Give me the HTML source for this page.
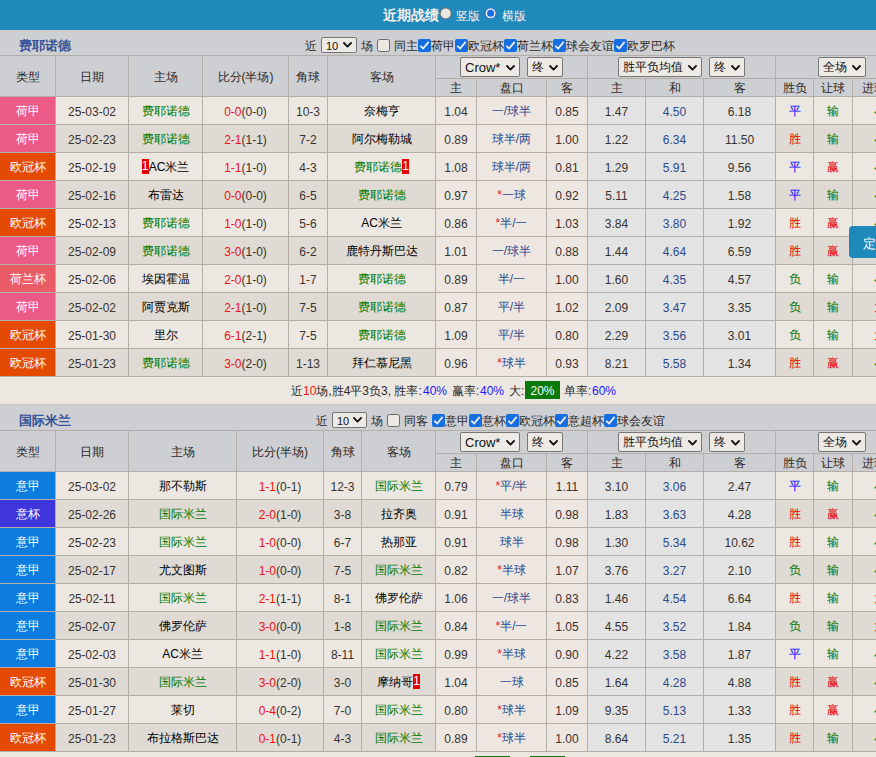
<!DOCTYPE html>
<html><head><meta charset="utf-8"><title>近期战绩</title><style>
html,body{margin:0;padding:0}
body{width:908px;height:757px;overflow:hidden;background:#ece7e1;font-family:"Liberation Sans",sans-serif;font-size:12px;color:#2d2926;position:relative}
.top{height:30px;background:#2089bc;position:relative;color:#fff}
.top b{position:absolute;left:383px;top:7px;font-size:14px;line-height:16px;font-weight:bold;color:#f4f1ec}
.top .tl{position:absolute;top:9px;font-size:12px;line-height:14px;color:#f4f1ec}
.rd{position:absolute;width:10px;height:10px;border-radius:50%;border:1px solid #6e6862;background:#ebe7e2}
.rd.on{border:1px solid #1a6de0;background:#f1ede8}
.rd.on:after{content:"";position:absolute;left:1.5px;top:1.5px;width:7px;height:7px;border-radius:50%;background:#1a6ef0}
.rs{position:absolute;display:block}
.sec{height:25px;border-bottom:1px solid #b3aea7;background:#cdcfd2;position:relative}
.tn{position:absolute;left:19px;top:8px;font-size:13px;line-height:15px;color:#37549a;font-weight:bold}
.lb{position:absolute;line-height:14px;font-size:12px;color:#2d2926;white-space:nowrap}
.cb{position:absolute;width:11px;height:11px;border:1px solid #6e6862;border-radius:2.5px;background:#ece8e3}
.cb.on{border:0;width:13px;height:13px;background:#156fe2;border-radius:2px}
.cb svg{display:block}
.sel{position:absolute;box-sizing:border-box;border:1px solid #767676;border-radius:2px;background:#ede9e4;font-size:13px;color:#111;padding-left:4px;padding-top:1px;white-space:nowrap;text-align:left;font-weight:normal}
.sel.sm{font-size:11px;padding-left:4px;padding-top:1px}
.sel.sm .cv{margin-top:-3px}
.sel .cv{position:absolute;right:4px;top:50%;margin-top:-2.5px}
.sel.cj{font-size:12px;padding-top:0}
table.t{border-collapse:separate;border-spacing:0;table-layout:fixed;width:908px}
.t th,.t td{box-sizing:border-box;border-right:1px solid #b3aea7;border-bottom:1px solid #b3aea7;padding:0;text-align:center;font-weight:normal;overflow:hidden;white-space:nowrap;font-size:12px}
.t th{background:#cdcfd2;color:#2d2926}
.h1 th{height:41px}
.h1 th .c{height:40px;line-height:38px;padding-top:2px}
.h1 th.hs{height:23px}
.h2 th{height:18px}
.h2 th .c{height:17px;line-height:15px;padding-top:2px}
.t td{height:28px}
.t .c{box-sizing:border-box;overflow:hidden;white-space:nowrap}
.t td .c{height:27px;line-height:23px;padding-top:4px}
.t td .c.z{line-height:25px;padding-top:2px}
tr.o td{background:#ece7e1}
tr.e td{background:#dfdad4}
.t tr td.hp{background:#eee6e0}
.t tr td.eu{background:#e3e3e3}
.t td.lg{color:#fff}
.t td.hj{background:#ec5b87}
.t td.og{background:#e54b00}
.t td.hl{background:#ea5c66}
.t td.yj{background:#0c7ddf}
.t td.yb{background:#4035dd}
.tm{color:#000}
.cg{color:#007a00}
.cr{color:#e11}
.t td{color:#38332f}
.t td.cb1{color:#00f}
.t td.wr{color:#e60000}
.t td.wg{color:#007000}
.t td.tm{color:#000}
.t td.pk{color:#2b4b8c}
.t td.lg{color:#fff}
.cbl{color:#1a1aff}
.sc{color:#e11}
.pk{color:#2b4b8c}
.rc{display:inline-block;font-style:normal;background:#e60000;color:#fff;width:7px;height:15px;line-height:15px;vertical-align:middle;text-align:center;position:relative;top:-1px}
.sum{height:27px;border-bottom:1px solid #c9c5bf;background:#ece7e1;position:relative}
.sum>span{position:absolute;top:7px;line-height:15px;white-space:nowrap;font-size:12px;color:#2d2926}
.sum>span.gb{top:4px;width:35px;height:18px;line-height:20px;background:#0a7a0a;color:#fff;text-align:center}
.sum>span.cbl{color:#1a1aff}
.sum span.cr{color:#e11}
.fl{position:absolute;left:849px;top:226px;width:40px;height:32px;background:#2089bc;border-radius:4px 0 0 4px;color:#fff;font-size:13px;line-height:35px;padding-left:14px;box-sizing:border-box}
.hsel{position:absolute;left:0;top:0}
</style></head><body>
<div class="top"><b>近期战绩</b><svg class="rs" style="left:439px;top:7px" width="14" height="14" viewBox="0 0 14 14"><circle cx="6.7" cy="6.4" r="5.5" fill="#ebe7e2" stroke="#6e6862" stroke-width="1"/></svg><span class="tl" style="left:456px">竖版</span><svg class="rs" style="left:484px;top:7px" width="14" height="14" viewBox="0 0 14 14"><circle cx="6.6" cy="6.3" r="5.5" fill="#f1ede8" stroke="#1668de" stroke-width="1"/><circle cx="6.6" cy="6.3" r="3.5" fill="#156fe2"/></svg><span class="tl" style="left:502px">横版</span></div>
<div class="sec"><b class="tn">费耶诺德</b><span class="lb" style="left:305px;top:9px">近</span><span class="sel sm" style="left:321px;top:7px;width:36px;height:16px;line-height:14px">10<svg class="cv" viewBox="0 0 9 6" width="9" height="6"><path d="M1 1 L4.5 4.6 L8 1" fill="none" stroke="#111" stroke-width="1.8" stroke-linecap="round" stroke-linejoin="round"/></svg></span><span class="lb" style="left:361px;top:9px">场</span><span class="cb" style="left:377px;top:9px"></span><span class="lb" style="left:394px;top:9px">同主</span><span class="cb on" style="left:418px;top:9px"><svg viewBox="0 0 13 13" width="13" height="13"><path d="M2.3 6.9 L5.2 9.5 L10.6 2.9" fill="none" stroke="#f0ece6" stroke-width="1.8" stroke-linecap="butt" stroke-linejoin="miter"/></svg></span><span class="lb" style="left:431px;top:9px">荷甲</span><span class="cb on" style="left:455px;top:9px"><svg viewBox="0 0 13 13" width="13" height="13"><path d="M2.3 6.9 L5.2 9.5 L10.6 2.9" fill="none" stroke="#f0ece6" stroke-width="1.8" stroke-linecap="butt" stroke-linejoin="miter"/></svg></span><span class="lb" style="left:468px;top:9px">欧冠杯</span><span class="cb on" style="left:504px;top:9px"><svg viewBox="0 0 13 13" width="13" height="13"><path d="M2.3 6.9 L5.2 9.5 L10.6 2.9" fill="none" stroke="#f0ece6" stroke-width="1.8" stroke-linecap="butt" stroke-linejoin="miter"/></svg></span><span class="lb" style="left:517px;top:9px">荷兰杯</span><span class="cb on" style="left:553px;top:9px"><svg viewBox="0 0 13 13" width="13" height="13"><path d="M2.3 6.9 L5.2 9.5 L10.6 2.9" fill="none" stroke="#f0ece6" stroke-width="1.8" stroke-linecap="butt" stroke-linejoin="miter"/></svg></span><span class="lb" style="left:566px;top:9px">球会友谊</span><span class="cb on" style="left:614px;top:9px"><svg viewBox="0 0 13 13" width="13" height="13"><path d="M2.3 6.9 L5.2 9.5 L10.6 2.9" fill="none" stroke="#f0ece6" stroke-width="1.8" stroke-linecap="butt" stroke-linejoin="miter"/></svg></span><span class="lb" style="left:627px;top:9px">欧罗巴杯</span></div>
<table class="t"><col style="width:56px"><col style="width:73px"><col style="width:74px"><col style="width:86px"><col style="width:39px"><col style="width:108px"><col style="width:41px"><col style="width:70px"><col style="width:41px"><col style="width:58px"><col style="width:58px"><col style="width:72px"><col style="width:38px"><col style="width:39px"><col style="width:55px">
<tr class="h1"><th rowspan="2"><div class="c">类型</div></th><th rowspan="2"><div class="c">日期</div></th><th rowspan="2"><div class="c">主场</div></th><th rowspan="2"><div class="c">比分(半场)</div></th><th rowspan="2"><div class="c">角球</div></th><th rowspan="2"><div class="c">客场</div></th><th colspan="3" class="hs"></th><th colspan="3" class="hs"></th><th colspan="3" class="hs"></th></tr>
<tr class="h2"><th><div class="c">主</div></th><th><div class="c">盘口</div></th><th><div class="c">客</div></th><th><div class="c">主</div></th><th><div class="c">和</div></th><th><div class="c">客</div></th><th><div class="c">胜负</div></th><th><div class="c">让球</div></th><th><div class="c">进球数</div></th></tr>
<tr class="o"><td class="lg hj"><div class="c z">荷甲</div></td><td><div class="c">25-03-02</div></td><td class="tm"><div class="c z"><span class="cg">费耶诺德</span></div></td><td><div class="c"><span class="sc">0-0</span>(0-0)</div></td><td><div class="c">10-3</div></td><td class="tm"><div class="c z">奈梅亨</div></td><td class="hp"><div class="c">1.04</div></td><td class="hp pk"><div class="c z">一/球半</div></td><td class="hp"><div class="c">0.85</div></td><td class="eu"><div class="c">1.47</div></td><td class="eu pk"><div class="c">4.50</div></td><td class="eu"><div class="c">6.18</div></td><td class="cb1"><div class="c z">平</div></td><td class="wg"><div class="c z">输</div></td><td><div class="c z"><span class="cg">小</span></div></td></tr>
<tr class="e"><td class="lg hj"><div class="c z">荷甲</div></td><td><div class="c">25-02-23</div></td><td class="tm"><div class="c z"><span class="cg">费耶诺德</span></div></td><td><div class="c"><span class="sc">2-1</span>(1-1)</div></td><td><div class="c">7-2</div></td><td class="tm"><div class="c z">阿尔梅勒城</div></td><td class="hp"><div class="c">0.89</div></td><td class="hp pk"><div class="c z">球半/两</div></td><td class="hp"><div class="c">1.00</div></td><td class="eu"><div class="c">1.22</div></td><td class="eu pk"><div class="c">6.34</div></td><td class="eu"><div class="c">11.50</div></td><td class="wr"><div class="c z">胜</div></td><td class="wg"><div class="c z">输</div></td><td><div class="c z"><span class="cg">小</span></div></td></tr>
<tr class="o"><td class="lg og"><div class="c z">欧冠杯</div></td><td><div class="c">25-02-19</div></td><td class="tm"><div class="c z"><i class="rc">1</i>AC米兰</div></td><td><div class="c"><span class="sc">1-1</span>(1-0)</div></td><td><div class="c">4-3</div></td><td class="tm"><div class="c z"><span class="cg">费耶诺德</span><i class="rc">1</i></div></td><td class="hp"><div class="c">1.08</div></td><td class="hp pk"><div class="c z">球半/两</div></td><td class="hp"><div class="c">0.81</div></td><td class="eu"><div class="c">1.29</div></td><td class="eu pk"><div class="c">5.91</div></td><td class="eu"><div class="c">9.56</div></td><td class="cb1"><div class="c z">平</div></td><td class="wr"><div class="c z">赢</div></td><td><div class="c z"><span class="cg">小</span></div></td></tr>
<tr class="e"><td class="lg hj"><div class="c z">荷甲</div></td><td><div class="c">25-02-16</div></td><td class="tm"><div class="c z">布雷达</div></td><td><div class="c"><span class="sc">0-0</span>(0-0)</div></td><td><div class="c">6-5</div></td><td class="tm"><div class="c z"><span class="cg">费耶诺德</span></div></td><td class="hp"><div class="c">0.97</div></td><td class="hp pk"><div class="c z"><span class="cr">*</span>一球</div></td><td class="hp"><div class="c">0.92</div></td><td class="eu"><div class="c">5.11</div></td><td class="eu pk"><div class="c">4.25</div></td><td class="eu"><div class="c">1.58</div></td><td class="cb1"><div class="c z">平</div></td><td class="wg"><div class="c z">输</div></td><td><div class="c z"><span class="cg">小</span></div></td></tr>
<tr class="o"><td class="lg og"><div class="c z">欧冠杯</div></td><td><div class="c">25-02-13</div></td><td class="tm"><div class="c z"><span class="cg">费耶诺德</span></div></td><td><div class="c"><span class="sc">1-0</span>(1-0)</div></td><td><div class="c">5-6</div></td><td class="tm"><div class="c z">AC米兰</div></td><td class="hp"><div class="c">0.86</div></td><td class="hp pk"><div class="c z"><span class="cr">*</span>半/一</div></td><td class="hp"><div class="c">1.03</div></td><td class="eu"><div class="c">3.84</div></td><td class="eu pk"><div class="c">3.80</div></td><td class="eu"><div class="c">1.92</div></td><td class="wr"><div class="c z">胜</div></td><td class="wr"><div class="c z">赢</div></td><td><div class="c z"><span class="cg">小</span></div></td></tr>
<tr class="e"><td class="lg hj"><div class="c z">荷甲</div></td><td><div class="c">25-02-09</div></td><td class="tm"><div class="c z"><span class="cg">费耶诺德</span></div></td><td><div class="c"><span class="sc">3-0</span>(1-0)</div></td><td><div class="c">6-2</div></td><td class="tm"><div class="c z">鹿特丹斯巴达</div></td><td class="hp"><div class="c">1.01</div></td><td class="hp pk"><div class="c z">一/球半</div></td><td class="hp"><div class="c">0.88</div></td><td class="eu"><div class="c">1.44</div></td><td class="eu pk"><div class="c">4.64</div></td><td class="eu"><div class="c">6.59</div></td><td class="wr"><div class="c z">胜</div></td><td class="wr"><div class="c z">赢</div></td><td><div class="c z"><span class="cg">小</span></div></td></tr>
<tr class="o"><td class="lg hl"><div class="c z">荷兰杯</div></td><td><div class="c">25-02-06</div></td><td class="tm"><div class="c z">埃因霍温</div></td><td><div class="c"><span class="sc">2-0</span>(1-0)</div></td><td><div class="c">1-7</div></td><td class="tm"><div class="c z"><span class="cg">费耶诺德</span></div></td><td class="hp"><div class="c">0.89</div></td><td class="hp pk"><div class="c z">半/一</div></td><td class="hp"><div class="c">1.00</div></td><td class="eu"><div class="c">1.60</div></td><td class="eu pk"><div class="c">4.35</div></td><td class="eu"><div class="c">4.57</div></td><td class="wg"><div class="c z">负</div></td><td class="wg"><div class="c z">输</div></td><td><div class="c z"><span class="cg">小</span></div></td></tr>
<tr class="e"><td class="lg hj"><div class="c z">荷甲</div></td><td><div class="c">25-02-02</div></td><td class="tm"><div class="c z">阿贾克斯</div></td><td><div class="c"><span class="sc">2-1</span>(1-0)</div></td><td><div class="c">7-5</div></td><td class="tm"><div class="c z"><span class="cg">费耶诺德</span></div></td><td class="hp"><div class="c">0.87</div></td><td class="hp pk"><div class="c z">平/半</div></td><td class="hp"><div class="c">1.02</div></td><td class="eu"><div class="c">2.09</div></td><td class="eu pk"><div class="c">3.47</div></td><td class="eu"><div class="c">3.35</div></td><td class="wg"><div class="c z">负</div></td><td class="wg"><div class="c z">输</div></td><td><div class="c z"><span class="cr">大</span></div></td></tr>
<tr class="o"><td class="lg og"><div class="c z">欧冠杯</div></td><td><div class="c">25-01-30</div></td><td class="tm"><div class="c z">里尔</div></td><td><div class="c"><span class="sc">6-1</span>(2-1)</div></td><td><div class="c">7-5</div></td><td class="tm"><div class="c z"><span class="cg">费耶诺德</span></div></td><td class="hp"><div class="c">1.09</div></td><td class="hp pk"><div class="c z">平/半</div></td><td class="hp"><div class="c">0.80</div></td><td class="eu"><div class="c">2.29</div></td><td class="eu pk"><div class="c">3.56</div></td><td class="eu"><div class="c">3.01</div></td><td class="wg"><div class="c z">负</div></td><td class="wg"><div class="c z">输</div></td><td><div class="c z"><span class="cr">大</span></div></td></tr>
<tr class="e"><td class="lg og"><div class="c z">欧冠杯</div></td><td><div class="c">25-01-23</div></td><td class="tm"><div class="c z"><span class="cg">费耶诺德</span></div></td><td><div class="c"><span class="sc">3-0</span>(2-0)</div></td><td><div class="c">1-13</div></td><td class="tm"><div class="c z">拜仁慕尼黑</div></td><td class="hp"><div class="c">0.96</div></td><td class="hp pk"><div class="c z"><span class="cr">*</span>球半</div></td><td class="hp"><div class="c">0.93</div></td><td class="eu"><div class="c">8.21</div></td><td class="eu pk"><div class="c">5.58</div></td><td class="eu"><div class="c">1.34</div></td><td class="wr"><div class="c z">胜</div></td><td class="wr"><div class="c z">赢</div></td><td><div class="c z"><span class="cg">小</span></div></td></tr>
</table>
<div class="sum"><span style="left:291px">近<span class="cr">10</span>场,胜4平3负3, 胜率:</span><span class="cbl" style="left:423px">40%</span><span style="left:452px">赢率:</span><span class="cbl" style="left:480px">40%</span><span style="left:509px">大:</span><span class="gb" style="left:525px">20%</span><span style="left:564px">单率:</span><span class="cbl" style="left:592px">60%</span></div>
<div class="sec"><b class="tn">国际米兰</b><span class="lb" style="left:316px;top:9px">近</span><span class="sel sm" style="left:332px;top:7px;width:35px;height:16px;line-height:14px">10<svg class="cv" viewBox="0 0 9 6" width="9" height="6"><path d="M1 1 L4.5 4.6 L8 1" fill="none" stroke="#111" stroke-width="1.8" stroke-linecap="round" stroke-linejoin="round"/></svg></span><span class="lb" style="left:371px;top:9px">场</span><span class="cb" style="left:387px;top:9px"></span><span class="lb" style="left:404px;top:9px">同客</span><span class="cb on" style="left:432px;top:9px"><svg viewBox="0 0 13 13" width="13" height="13"><path d="M2.3 6.9 L5.2 9.5 L10.6 2.9" fill="none" stroke="#f0ece6" stroke-width="1.8" stroke-linecap="butt" stroke-linejoin="miter"/></svg></span><span class="lb" style="left:445px;top:9px">意甲</span><span class="cb on" style="left:469px;top:9px"><svg viewBox="0 0 13 13" width="13" height="13"><path d="M2.3 6.9 L5.2 9.5 L10.6 2.9" fill="none" stroke="#f0ece6" stroke-width="1.8" stroke-linecap="butt" stroke-linejoin="miter"/></svg></span><span class="lb" style="left:482px;top:9px">意杯</span><span class="cb on" style="left:506px;top:9px"><svg viewBox="0 0 13 13" width="13" height="13"><path d="M2.3 6.9 L5.2 9.5 L10.6 2.9" fill="none" stroke="#f0ece6" stroke-width="1.8" stroke-linecap="butt" stroke-linejoin="miter"/></svg></span><span class="lb" style="left:519px;top:9px">欧冠杯</span><span class="cb on" style="left:555px;top:9px"><svg viewBox="0 0 13 13" width="13" height="13"><path d="M2.3 6.9 L5.2 9.5 L10.6 2.9" fill="none" stroke="#f0ece6" stroke-width="1.8" stroke-linecap="butt" stroke-linejoin="miter"/></svg></span><span class="lb" style="left:568px;top:9px">意超杯</span><span class="cb on" style="left:604px;top:9px"><svg viewBox="0 0 13 13" width="13" height="13"><path d="M2.3 6.9 L5.2 9.5 L10.6 2.9" fill="none" stroke="#f0ece6" stroke-width="1.8" stroke-linecap="butt" stroke-linejoin="miter"/></svg></span><span class="lb" style="left:617px;top:9px">球会友谊</span></div>
<table class="t"><col style="width:56px"><col style="width:73px"><col style="width:108px"><col style="width:87px"><col style="width:38px"><col style="width:74px"><col style="width:41px"><col style="width:70px"><col style="width:41px"><col style="width:58px"><col style="width:58px"><col style="width:72px"><col style="width:38px"><col style="width:39px"><col style="width:55px">
<tr class="h1"><th rowspan="2"><div class="c">类型</div></th><th rowspan="2"><div class="c">日期</div></th><th rowspan="2"><div class="c">主场</div></th><th rowspan="2"><div class="c">比分(半场)</div></th><th rowspan="2"><div class="c">角球</div></th><th rowspan="2"><div class="c">客场</div></th><th colspan="3" class="hs"></th><th colspan="3" class="hs"></th><th colspan="3" class="hs"></th></tr>
<tr class="h2"><th><div class="c">主</div></th><th><div class="c">盘口</div></th><th><div class="c">客</div></th><th><div class="c">主</div></th><th><div class="c">和</div></th><th><div class="c">客</div></th><th><div class="c">胜负</div></th><th><div class="c">让球</div></th><th><div class="c">进球数</div></th></tr>
<tr class="o"><td class="lg yj"><div class="c z">意甲</div></td><td><div class="c">25-03-02</div></td><td class="tm"><div class="c z">那不勒斯</div></td><td><div class="c"><span class="sc">1-1</span>(0-1)</div></td><td><div class="c">12-3</div></td><td class="tm"><div class="c z"><span class="cg">国际米兰</span></div></td><td class="hp"><div class="c">0.79</div></td><td class="hp pk"><div class="c z"><span class="cr">*</span>平/半</div></td><td class="hp"><div class="c">1.11</div></td><td class="eu"><div class="c">3.10</div></td><td class="eu pk"><div class="c">3.06</div></td><td class="eu"><div class="c">2.47</div></td><td class="cb1"><div class="c z">平</div></td><td class="wg"><div class="c z">输</div></td><td><div class="c z"><span class="cg">小</span></div></td></tr>
<tr class="e"><td class="lg yb"><div class="c z">意杯</div></td><td><div class="c">25-02-26</div></td><td class="tm"><div class="c z"><span class="cg">国际米兰</span></div></td><td><div class="c"><span class="sc">2-0</span>(1-0)</div></td><td><div class="c">3-8</div></td><td class="tm"><div class="c z">拉齐奥</div></td><td class="hp"><div class="c">0.91</div></td><td class="hp pk"><div class="c z">半球</div></td><td class="hp"><div class="c">0.98</div></td><td class="eu"><div class="c">1.83</div></td><td class="eu pk"><div class="c">3.63</div></td><td class="eu"><div class="c">4.28</div></td><td class="wr"><div class="c z">胜</div></td><td class="wr"><div class="c z">赢</div></td><td><div class="c z"><span class="cg">小</span></div></td></tr>
<tr class="o"><td class="lg yj"><div class="c z">意甲</div></td><td><div class="c">25-02-23</div></td><td class="tm"><div class="c z"><span class="cg">国际米兰</span></div></td><td><div class="c"><span class="sc">1-0</span>(0-0)</div></td><td><div class="c">6-7</div></td><td class="tm"><div class="c z">热那亚</div></td><td class="hp"><div class="c">0.91</div></td><td class="hp pk"><div class="c z">球半</div></td><td class="hp"><div class="c">0.98</div></td><td class="eu"><div class="c">1.30</div></td><td class="eu pk"><div class="c">5.34</div></td><td class="eu"><div class="c">10.62</div></td><td class="wr"><div class="c z">胜</div></td><td class="wg"><div class="c z">输</div></td><td><div class="c z"><span class="cg">小</span></div></td></tr>
<tr class="e"><td class="lg yj"><div class="c z">意甲</div></td><td><div class="c">25-02-17</div></td><td class="tm"><div class="c z">尤文图斯</div></td><td><div class="c"><span class="sc">1-0</span>(0-0)</div></td><td><div class="c">7-5</div></td><td class="tm"><div class="c z"><span class="cg">国际米兰</span></div></td><td class="hp"><div class="c">0.82</div></td><td class="hp pk"><div class="c z"><span class="cr">*</span>半球</div></td><td class="hp"><div class="c">1.07</div></td><td class="eu"><div class="c">3.76</div></td><td class="eu pk"><div class="c">3.27</div></td><td class="eu"><div class="c">2.10</div></td><td class="wg"><div class="c z">负</div></td><td class="wg"><div class="c z">输</div></td><td><div class="c z"><span class="cg">小</span></div></td></tr>
<tr class="o"><td class="lg yj"><div class="c z">意甲</div></td><td><div class="c">25-02-11</div></td><td class="tm"><div class="c z"><span class="cg">国际米兰</span></div></td><td><div class="c"><span class="sc">2-1</span>(1-1)</div></td><td><div class="c">8-1</div></td><td class="tm"><div class="c z">佛罗伦萨</div></td><td class="hp"><div class="c">1.06</div></td><td class="hp pk"><div class="c z">一/球半</div></td><td class="hp"><div class="c">0.83</div></td><td class="eu"><div class="c">1.46</div></td><td class="eu pk"><div class="c">4.54</div></td><td class="eu"><div class="c">6.64</div></td><td class="wr"><div class="c z">胜</div></td><td class="wg"><div class="c z">输</div></td><td><div class="c z"><span class="cr">大</span></div></td></tr>
<tr class="e"><td class="lg yj"><div class="c z">意甲</div></td><td><div class="c">25-02-07</div></td><td class="tm"><div class="c z">佛罗伦萨</div></td><td><div class="c"><span class="sc">3-0</span>(0-0)</div></td><td><div class="c">1-8</div></td><td class="tm"><div class="c z"><span class="cg">国际米兰</span></div></td><td class="hp"><div class="c">0.84</div></td><td class="hp pk"><div class="c z"><span class="cr">*</span>半/一</div></td><td class="hp"><div class="c">1.05</div></td><td class="eu"><div class="c">4.55</div></td><td class="eu pk"><div class="c">3.52</div></td><td class="eu"><div class="c">1.84</div></td><td class="wg"><div class="c z">负</div></td><td class="wg"><div class="c z">输</div></td><td><div class="c z"><span class="cr">大</span></div></td></tr>
<tr class="o"><td class="lg yj"><div class="c z">意甲</div></td><td><div class="c">25-02-03</div></td><td class="tm"><div class="c z">AC米兰</div></td><td><div class="c"><span class="sc">1-1</span>(1-0)</div></td><td><div class="c">8-11</div></td><td class="tm"><div class="c z"><span class="cg">国际米兰</span></div></td><td class="hp"><div class="c">0.99</div></td><td class="hp pk"><div class="c z"><span class="cr">*</span>半球</div></td><td class="hp"><div class="c">0.90</div></td><td class="eu"><div class="c">4.22</div></td><td class="eu pk"><div class="c">3.58</div></td><td class="eu"><div class="c">1.87</div></td><td class="cb1"><div class="c z">平</div></td><td class="wg"><div class="c z">输</div></td><td><div class="c z"><span class="cg">小</span></div></td></tr>
<tr class="e"><td class="lg og"><div class="c z">欧冠杯</div></td><td><div class="c">25-01-30</div></td><td class="tm"><div class="c z"><span class="cg">国际米兰</span></div></td><td><div class="c"><span class="sc">3-0</span>(2-0)</div></td><td><div class="c">3-0</div></td><td class="tm"><div class="c z">摩纳哥<i class="rc">1</i></div></td><td class="hp"><div class="c">1.04</div></td><td class="hp pk"><div class="c z">一球</div></td><td class="hp"><div class="c">0.85</div></td><td class="eu"><div class="c">1.64</div></td><td class="eu pk"><div class="c">4.28</div></td><td class="eu"><div class="c">4.88</div></td><td class="wr"><div class="c z">胜</div></td><td class="wr"><div class="c z">赢</div></td><td><div class="c z"><span class="cg">小</span></div></td></tr>
<tr class="o"><td class="lg yj"><div class="c z">意甲</div></td><td><div class="c">25-01-27</div></td><td class="tm"><div class="c z">莱切</div></td><td><div class="c"><span class="sc">0-4</span>(0-2)</div></td><td><div class="c">7-0</div></td><td class="tm"><div class="c z"><span class="cg">国际米兰</span></div></td><td class="hp"><div class="c">0.80</div></td><td class="hp pk"><div class="c z"><span class="cr">*</span>球半</div></td><td class="hp"><div class="c">1.09</div></td><td class="eu"><div class="c">9.35</div></td><td class="eu pk"><div class="c">5.13</div></td><td class="eu"><div class="c">1.33</div></td><td class="wr"><div class="c z">胜</div></td><td class="wr"><div class="c z">赢</div></td><td><div class="c z"><span class="cg">小</span></div></td></tr>
<tr class="e"><td class="lg og"><div class="c z">欧冠杯</div></td><td><div class="c">25-01-23</div></td><td class="tm"><div class="c z">布拉格斯巴达</div></td><td><div class="c"><span class="sc">0-1</span>(0-1)</div></td><td><div class="c">4-3</div></td><td class="tm"><div class="c z"><span class="cg">国际米兰</span></div></td><td class="hp"><div class="c">0.89</div></td><td class="hp pk"><div class="c z"><span class="cr">*</span>球半</div></td><td class="hp"><div class="c">1.00</div></td><td class="eu"><div class="c">8.64</div></td><td class="eu pk"><div class="c">5.21</div></td><td class="eu"><div class="c">1.35</div></td><td class="wr"><div class="c z">胜</div></td><td class="wg"><div class="c z">输</div></td><td><div class="c z"><span class="cg">小</span></div></td></tr>
</table>
<div class="sum"><span style="left:291px">近<span class="cr">10</span>场,胜6平2负2, 胜率:</span><span class="gb" style="left:475px">60%</span><span class="gb" style="left:530px">30%</span></div>
<div class="hsel"><span class="sel " style="left:460px;top:57px;width:60px;height:20px;line-height:18px">Crow*<svg class="cv" viewBox="0 0 9 6" width="9" height="6"><path d="M1 1 L4.5 4.6 L8 1" fill="none" stroke="#111" stroke-width="1.8" stroke-linecap="round" stroke-linejoin="round"/></svg></span><span class="sel cj" style="left:527px;top:57px;width:36px;height:20px;line-height:18px">终<svg class="cv" viewBox="0 0 9 6" width="9" height="6"><path d="M1 1 L4.5 4.6 L8 1" fill="none" stroke="#111" stroke-width="1.8" stroke-linecap="round" stroke-linejoin="round"/></svg></span><span class="sel cj" style="left:618px;top:57px;width:84px;height:20px;line-height:18px">胜平负均值<svg class="cv" viewBox="0 0 9 6" width="9" height="6"><path d="M1 1 L4.5 4.6 L8 1" fill="none" stroke="#111" stroke-width="1.8" stroke-linecap="round" stroke-linejoin="round"/></svg></span><span class="sel cj" style="left:709px;top:57px;width:36px;height:20px;line-height:18px">终<svg class="cv" viewBox="0 0 9 6" width="9" height="6"><path d="M1 1 L4.5 4.6 L8 1" fill="none" stroke="#111" stroke-width="1.8" stroke-linecap="round" stroke-linejoin="round"/></svg></span><span class="sel cj" style="left:818px;top:57px;width:48px;height:20px;line-height:18px">全场<svg class="cv" viewBox="0 0 9 6" width="9" height="6"><path d="M1 1 L4.5 4.6 L8 1" fill="none" stroke="#111" stroke-width="1.8" stroke-linecap="round" stroke-linejoin="round"/></svg></span><span class="sel " style="left:460px;top:432px;width:60px;height:20px;line-height:18px">Crow*<svg class="cv" viewBox="0 0 9 6" width="9" height="6"><path d="M1 1 L4.5 4.6 L8 1" fill="none" stroke="#111" stroke-width="1.8" stroke-linecap="round" stroke-linejoin="round"/></svg></span><span class="sel cj" style="left:527px;top:432px;width:36px;height:20px;line-height:18px">终<svg class="cv" viewBox="0 0 9 6" width="9" height="6"><path d="M1 1 L4.5 4.6 L8 1" fill="none" stroke="#111" stroke-width="1.8" stroke-linecap="round" stroke-linejoin="round"/></svg></span><span class="sel cj" style="left:618px;top:432px;width:84px;height:20px;line-height:18px">胜平负均值<svg class="cv" viewBox="0 0 9 6" width="9" height="6"><path d="M1 1 L4.5 4.6 L8 1" fill="none" stroke="#111" stroke-width="1.8" stroke-linecap="round" stroke-linejoin="round"/></svg></span><span class="sel cj" style="left:709px;top:432px;width:36px;height:20px;line-height:18px">终<svg class="cv" viewBox="0 0 9 6" width="9" height="6"><path d="M1 1 L4.5 4.6 L8 1" fill="none" stroke="#111" stroke-width="1.8" stroke-linecap="round" stroke-linejoin="round"/></svg></span><span class="sel cj" style="left:818px;top:432px;width:48px;height:20px;line-height:18px">全场<svg class="cv" viewBox="0 0 9 6" width="9" height="6"><path d="M1 1 L4.5 4.6 L8 1" fill="none" stroke="#111" stroke-width="1.8" stroke-linecap="round" stroke-linejoin="round"/></svg></span></div>
<div class="fl">定</div>
</body></html>
